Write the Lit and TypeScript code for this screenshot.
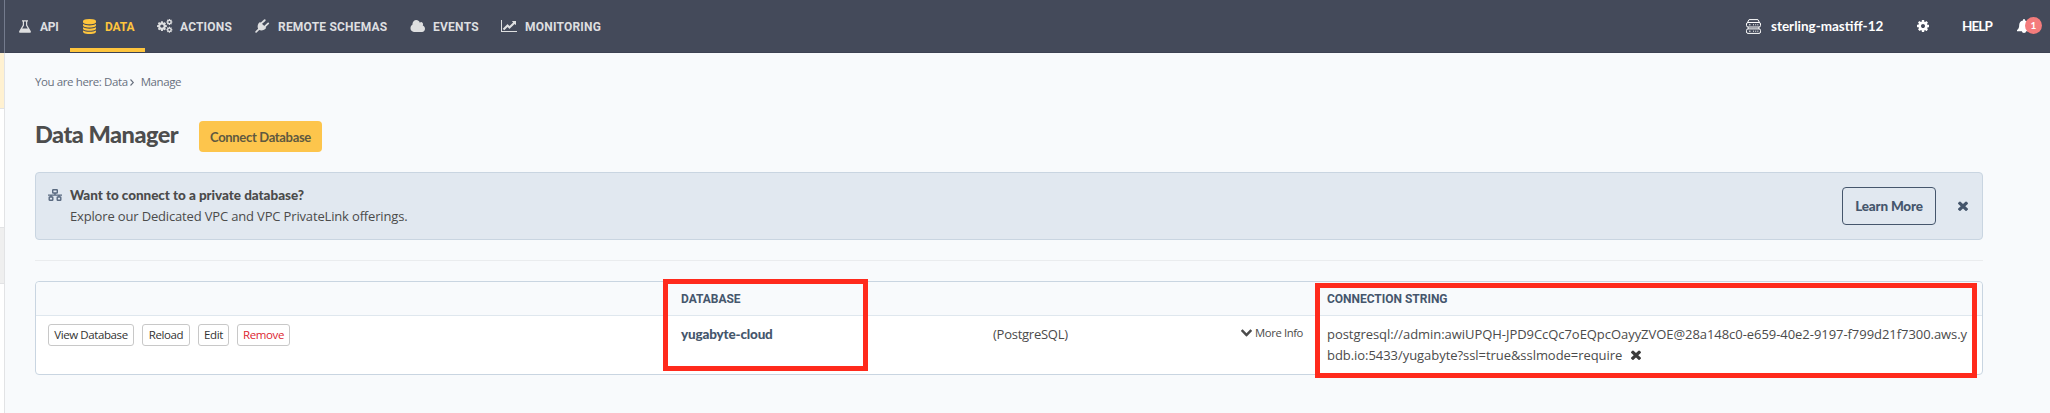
import { LitElement, html, css, svg } from "lit";
import { customElement, property } from "lit/decorators.js";

const COG =
  "M1152 896q0-106-75-181t-181-75-181 75-75 181 75 181 181 75 181-75 75-181zm512-109v222q0 12-8 23t-20 13l-185 28q-19 54-39 91 35 50 107 138 10 12 10 25t-9 23q-27 37-99 108t-94 71q-12 0-26-9l-138-108q-44 23-91 38-16 136-29 186-7 28-36 28h-222q-14 0-24.5-8.5t-11.5-21.5l-28-184q-49-16-90-37l-141 107q-10 9-25 9-14 0-25-11-126-114-165-168-7-10-7-23 0-12 8-23 15-21 51-66.5t54-70.5q-27-50-41-99l-183-27q-13-2-21-12.5t-8-23.5v-222q0-12 8-23t19-13l186-28q14-46 39-92-40-57-107-138-10-12-10-24 0-10 9-23 26-36 98.5-107.5t94.5-71.5q13 0 26 10l138 107q44-23 91-38 16-136 29-186 7-28 36-28h222q14 0 24.5 8.5t11.5 21.5l28 184q49 16 90 37l142-107q9-9 24-9 13 0 25 10 129 119 165 170 7 8 7 22 0 12-8 23-15 21-51 66.5t-54 70.5q26 50 41 98l183 28q13 2 21 12.5t8 23.5z";
const TIMES =
  "M1490 1322q0 40-28 68l-136 136q-28 28-68 28t-68-28l-294-294-294 294q-28 28-68 28t-68-28l-136-136q-28-28-28-68t28-68l294-294-294-294q-28-28-28-68t28-68l136-136q28-28 68-28t68 28l294 294 294-294q28-28 68-28t68 28l136 136q28 28 28 68t-28 68l-294 294 294 294q28 28 28 68z";
const DISK =
  "q237 0 443-43t325-127v170q0 69-103 128t-280 93.5-385 34.5-385-34.5-280-93.5-103-128v-170q119 84 325 127t443 43z";

const ICONS: Record<string, { w: number; h: number; box: string; art: unknown }> = {
  flask: {
    w: 12, h: 13, box: "0 0 12 13",
    art: svg`<path fill-rule="evenodd" d="M3 .2h6v1.2h-.8v3.7l3.5 5.9c.6 1.100 0 1.800-1 1.800H1.300c-1 0-1.600-.7-1-1.800l3.500-5.900V1.400H3zM5 1.400v4L3.200 8.500h5.600L7 5.400v-4z"/>`,
  },
  database: {
    w: 13, h: 15, box: "128 0 1536 1792",
    art: svg`<path d=${`M896 768${DISK}M896 1536${DISK}M896 1152${DISK}M896 0q208 0 385 34.5t280 93.5 103 128v128q0 69-103 128t-280 93.5-385 34.5-385-34.5-280-93.5-103-128v-128q0-69 103-128t280-93.5 385-34.5z`}/>`,
  },
  cogs: {
    w: 15, h: 14, box: "0 0 15 14",
    art: svg`<g transform="translate(-.8 1.400) scale(.0064)"><path fill-rule="evenodd" d=${COG}/></g>
      <g transform="translate(8.900 -.5) scale(.0039)"><path fill-rule="evenodd" d=${COG}/></g>
      <g transform="translate(8.900 7.300) scale(.0039)"><path fill-rule="evenodd" d=${COG}/></g>`,
  },
  plug: {
    w: 14, h: 14, box: "0 0 14 14",
    art: svg`<path d="M5 2.900l6.200 5.900c-1.500 2.500-4.700 3.400-7 2.300L1.700 13.500c-.9.7-1.900-.4-1.200-1.300l2.600-2.500C2 7.500 2.800 4.300 5 2.900z"/>
      <path fill="none" stroke="currentColor" stroke-width="1.900" stroke-linecap="round" d="M6.500 4.100L9.700 1.200M10 7.400l3.200-3"/>`,
  },
  cloud: {
    w: 15, h: 11, box: "0 256 1984 1280",
    art: svg`<path d="M1984 1152q0 159-112.5 271.500t-271.500 112.500h-1088q-185 0-316.500-131.500t-131.500-316.500q0-132 71-241.500t187-163.500q-2-28-2-43 0-212 150-362t362-150q158 0 286.500 88t187.500 230q70-62 166-62 106 0 181 75t75 181q0 75-41 138 129 30 213 134.500t84 239.500z"/>`,
  },
  chart: {
    w: 16, h: 12, box: "0 128 2048 1536",
    art: svg`<path d="M2048 1536v128h-2048v-1536h128v1408h1920zm-128-1248v435q0 21-19.500 29.500t-35.500-7.500l-121-121-633 633q-10 10-23 10t-23-10l-233-233-416 416-192-192 585-585q10-10 23-10t23 10l233 233 464-464-121-121q-16-16-7.500-35.500t29.500-19.500h435q14 0 23 9t9 23z"/>`,
  },
  cog: { w: 12, h: 12, box: "128 128 1536 1536", art: svg`<path fill-rule="evenodd" d=${COG}/>` },
  times: { w: 10, h: 10, box: "302 302 1188 1252", art: svg`<path d=${TIMES}/>` },
  chevron: {
    w: 11, h: 7, box: "90 630 1612 1000",
    art: svg`<path d="M1683 808l-742 741q-19 19-45 19t-45-19l-742-741q-19-19-19-45.500t19-45.500l166-165q19-19 45-19t45 19l531 531 531-531q19-19 45-19t45 19l166 165q19 19 19 45.500t-19 45.500z"/>`,
  },
  bell: {
    w: 14, h: 14, box: "0 0 14 14",
    art: svg`<path d="M6 .9a1 1 0 0 1 2 0v.5c2.400.5 3.800 2.200 3.800 4.500 0 2.500.6 4 2.200 5.200v1.100H0v-1.100c1.600-1.200 2.200-2.700 2.200-5.200 0-2.300 1.400-4 3.800-4.500zM4.900 12.200h4.200a2.100 1.800 0 0 1-4.200 0z"/>`,
  },
  server: {
    w: 15, h: 15, box: "0 0 15 15",
    art: svg`<g fill="none" stroke="currentColor" stroke-width="1">
      <path d="M1.500 3.500L3.100.6h8.800l1.600 2.900"/><rect x=".5" y="3.500" width="14" height="4.500" rx="1.500"/>
      <path d="M2.200 8.200v1.600M12.800 8.200v1.600"/><rect x=".5" y="9.900" width="14" height="4.500" rx="1.500"/>
      <path d="M3 5.800h1.500M7 5.800h1M9.200 5.800h1M11.300 5.800h1M3 12.200h1.500M7 12.200h1M9.200 12.200h1M11.300 12.200h1"/></g>`,
  },
  network: {
    w: 14, h: 12, box: "0 0 14 12",
    art: svg`<g fill="none" stroke="currentColor" stroke-width="1.400">
      <rect x="4.700" y=".8" width="4.600" height="3.200" rx=".5"/><rect x="1.200" y="8" width="3.600" height="3.200" rx=".5"/>
      <rect x="9.200" y="8" width="3.600" height="3.200" rx=".5"/><path d="M7 4v2M0 6.100h14M3 6v2M11 6v2"/></g>`,
  },
  angle: {
    w: 4, h: 7, box: "0 0 4 7",
    art: svg`<path fill="none" stroke="currentColor" stroke-width="1.100" d="M.5.5l2.800 3-2.800 3"/>`,
  },
};

@customElement("ui-icon")
class UiIcon extends LitElement {
  static styles = css`
    :host { display: inline-flex; flex: none; }
    svg { display: block; fill: currentColor; overflow: visible; }
  `;
  @property() name = "";
  render() {
    const i = ICONS[this.name];
    return html`<svg width=${i.w} height=${i.h} viewBox=${i.box} preserveAspectRatio="none">${i.art}</svg>`;
  }
}

const NAV = [
  { icon: "flask", label: "API", cls: "api" },
  { icon: "database", label: "DATA", cls: "data active" },
  { icon: "cogs", label: "ACTIONS", cls: "actions" },
  { icon: "plug", label: "REMOTE SCHEMAS", cls: "remote" },
  { icon: "cloud", label: "EVENTS", cls: "events" },
  { icon: "chart", label: "MONITORING", cls: "monitoring" },
];

@customElement("top-bar")
class TopBar extends LitElement {
  static styles = css`
    :host {
      display: flex; justify-content: space-between; height: 53px; box-sizing: border-box;
      background: #444a5a; border-bottom: 1px solid #3d4253; color: #fff;
      font-family: "Lato", sans-serif; font-weight: 700; white-space: nowrap;
    }
    nav { display: flex; padding-left: 2px; font-family: "Roboto", sans-serif; }
    .item {
      display: flex; align-items: center; box-sizing: border-box; height: 52px;
      padding: 4px 0 0 12px; border-bottom: 4px solid transparent;
      color: #dedfe0; font-size: 12px; line-height: 16px;
    }
    .item span { padding-top: 1px; }
    .item ui-icon { width: 21px; }
    .active { color: #fec53d; border-bottom-color: #fec53d; padding-left: 13px; }
    .api { width: 63px; letter-spacing: -0.3px; }
    .data { width: 75px; letter-spacing: -0.1px; }
    .data ui-icon { width: 22px; }
    .actions { width: 98px; letter-spacing: 0.18px; }
    .actions ui-icon, .remote ui-icon, .events ui-icon { width: 23px; }
    .remote { width: 155px; letter-spacing: 0.2px; }
    .events { width: 91px; letter-spacing: 0.26px; }
    .monitoring { letter-spacing: 0.22px; }
    .monitoring ui-icon { width: 24px; }
    .right { display: flex; align-items: center; height: 52px; font-size: 13.5px; line-height: 18px; }
    .project { display: flex; align-items: center; gap: 10px; width: 171px; }
    .settings { width: 45px; display: flex; }
    .help { width: 55px; letter-spacing: -0.9px; }
    .alerts { width: 33px; position: relative; display: flex; }
    .count {
      position: absolute; left: 8px; top: -2px; width: 17px; height: 17px; border-radius: 50%;
      background: #f47c7c; font-size: 10px; line-height: 17px; text-align: center;
    }
  `;
  render() {
    return html`
      <nav>
        ${NAV.map((n) => html`<div class="item ${n.cls}"><ui-icon name=${n.icon}></ui-icon><span>${n.label}</span></div>`)}
      </nav>
      <div class="right">
        <div class="project"><ui-icon name="server"></ui-icon><span>sterling-mastiff-12</span></div>
        <div class="settings"><ui-icon name="cog"></ui-icon></div>
        <div class="help">HELP</div>
        <div class="alerts"><ui-icon name="bell"></ui-icon><span class="count">1</span></div>
      </div>`;
  }
}

@customElement("private-banner")
class PrivateBanner extends LitElement {
  static styles = css`
    :host {
      display: flex; align-items: center; box-sizing: border-box; height: 68px;
      padding: 0 14px 0 12px; border: 1px solid #c9d5e1; border-radius: 4px; background: #e1e8f0;
      font: 13px/21px "Open Sans", sans-serif; color: #4b4b4b;
    }
    .net { align-self: flex-start; margin: 16px 8px 0 0; color: #5a6a80; }
    .copy { flex: 1; letter-spacing: -0.16px; }
    .head { font: 900 13.5px/21px "Lato", sans-serif; letter-spacing: -0.05px; }
    .more {
      box-sizing: border-box; width: 94px; height: 38px; padding: 0; margin-right: 22px;
      border: 1px solid #45566c; border-radius: 4px; background: none; color: #45566c;
      font: 900 13.5px/20px "Lato", sans-serif; letter-spacing: -0.2px;
    }
    .close { color: #45566c; }
  `;
  render() {
    return html`
      <ui-icon class="net" name="network"></ui-icon>
      <div class="copy">
        <div class="head">Want to connect to a private database?</div>
        <div>Explore our Dedicated VPC and VPC PrivateLink offerings.</div>
      </div>
      <button class="more">Learn More</button>
      <ui-icon class="close" name="times"></ui-icon>`;
  }
}

@customElement("database-table")
class DatabaseTable extends LitElement {
  static styles = css`
    :host {
      display: block; box-sizing: border-box; height: 94px; position: relative;
      border: 1px solid #c9d5e1; border-radius: 4px; background: #fff;
      font: 13px/21px "Open Sans", sans-serif; color: #4b4b4b;
    }
    .row { display: grid; grid-template-columns: 633px 646px 1fr; }
    .head {
      height: 33px; align-items: center; background: #f8fafc; border-bottom: 1px solid #dfe7ee;
      border-radius: 4px 4px 0 0; color: #45566c; font: 700 12px/16px "Roboto", sans-serif;
      letter-spacing: -0.02px;
    }
    .cell { padding: 0 12px; }
    .body .cell { box-sizing: border-box; padding-top: 8px; }
    .actions { display: flex; gap: 8px; align-items: flex-start; }
    .btn {
      box-sizing: border-box; height: 22px; padding: 0; border: 1px solid #c8c8c8; border-radius: 3px;
      background: #fff; color: #333; font: 11.5px/18px "Open Sans", sans-serif; letter-spacing: -0.4px;
    }
    .view { width: 86px; }
    .reload { width: 48px; }
    .edit { width: 31px; }
    .remove { width: 53px; color: #dc2530; }
    .db { display: flex; }
    .name { width: 312px; color: #45566c; font: 900 13.5px/21px "Lato", sans-serif; letter-spacing: -0.17px; }
    .kind { flex: 1; letter-spacing: -0.25px; }
    .info { display: flex; align-items: center; gap: 3px; height: 18px; font-size: 11.3px; letter-spacing: -0.4px; }
    .info span { margin-top: -1px; }
    .conn { letter-spacing: -0.05px; white-space: nowrap; }
    .conn ui-icon { margin-left: 9px; color: #3c3c3c; }
    .mark { position: absolute; box-sizing: border-box; border: 5px solid #ff2a1c; }
    .mark.one { left: 627px; top: -3px; width: 205px; height: 92px; }
    .mark.two { left: 1279px; top: 1px; width: 662px; height: 95px; }
  `;
  render() {
    return html`
      <div class="row head">
        <div class="cell"></div>
        <div class="cell">DATABASE</div>
        <div class="cell">CONNECTION STRING</div>
      </div>
      <div class="row body">
        <div class="cell actions">
          <button class="btn view">View Database</button>
          <button class="btn reload">Reload</button>
          <button class="btn edit">Edit</button>
          <button class="btn remove">Remove</button>
        </div>
        <div class="cell db">
          <div class="name">yugabyte-cloud</div>
          <div class="kind">(PostgreSQL)</div>
          <div class="info"><ui-icon name="chevron"></ui-icon><span>More Info</span></div>
        </div>
        <div class="cell conn">
          postgresql://admin:awiUPQH-JPD9CcQc7oEQpcOayyZVOE@28a148c0-e659-40e2-9197-f799d21f7300.aws.y<br />bdb.io:5433/yugabyte?ssl=true&amp;sslmode=require<ui-icon name="times"></ui-icon>
        </div>
      </div>
      <div class="mark one"></div>
      <div class="mark two"></div>`;
  }
}

@customElement("app-root")
class AppRoot extends LitElement {
  static styles = css`
    :host { display: flex; height: 413px; overflow: hidden; background: #f8fafc; }
    .side { display: flex; flex-direction: column; width: 5px; box-sizing: border-box; border-right: 1px solid #e2e3e5; background: #fff; }
    .side .dark { height: 53px; background: #444a5a; margin-right: -1px; border-right: 1px solid #747b8d; box-sizing: border-box; }
    .side .warn { height: 55px; background: #fff1d1; border-bottom: 1px solid #e2e3e5; }
    .side .gap { height: 118px; }
    .side .grey { height: 55px; background: #efefef; border: solid #e2e3e5; border-width: 1px 0; }
    .main { flex: 1; min-width: 0; }
    .content { padding: 19px 67px 0 30px; }
    .crumbs {
      display: flex; align-items: center; height: 20px; color: #68707e;
      font: 11.5px/20px "Open Sans", sans-serif; letter-spacing: -0.4px;
    }
    .crumbs ui-icon { margin: 1px 7px 0 2px; }
    .title { display: flex; align-items: center; margin-top: 29px; height: 31px; }
    h1 {
      margin: 0; width: 164px; color: #4d4d4d; font: 900 23.5px/30px "Lato", sans-serif;
      letter-spacing: -0.5px; padding-bottom: 6px; white-space: nowrap;
    }
    .connect {
      width: 123px; height: 31px; padding: 0; border: 0; border-radius: 4px; background: #fdc54c; color: #5f5940;
      font: 700 13px/20px "Lato", sans-serif; letter-spacing: -0.33px;
    }
    private-banner { margin-top: 20px; }
    hr { margin: 20px 0; border: 0; height: 1px; background: #eaecee; }
  `;
  render() {
    return html`
      <div class="side"><div class="dark"></div><div class="warn"></div><div class="gap"></div><div class="grey"></div></div>
      <div class="main">
        <top-bar></top-bar>
        <div class="content">
          <div class="crumbs"><span>You are here: Data</span><ui-icon name="angle"></ui-icon><span>Manage</span></div>
          <div class="title"><h1>Data Manager</h1><button class="connect">Connect Database</button></div>
          <private-banner></private-banner>
          <hr />
          <database-table></database-table>
        </div>
      </div>`;
  }
}
